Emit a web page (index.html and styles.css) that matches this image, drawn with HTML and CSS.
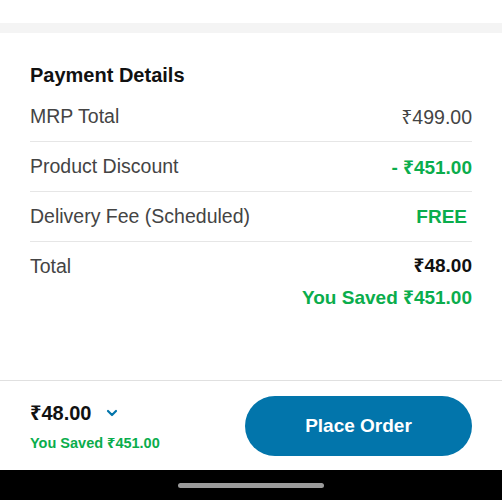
FILE: index.html
```html
<!DOCTYPE html>
<html lang="en">
<head>
  <meta charset="UTF-8">
  <meta name="viewport" content="width=device-width, initial-scale=1.0">
  <title>Payment Details</title>
  <link rel="stylesheet" href="styles.css">
</head>
<body>

  <div class="top"></div>
  <div class="band"></div>

  <main class="details">
    <h2>Payment Details</h2>
    <div class="row">
      <span>MRP Total</span>
      <span>₹499.00</span>
    </div>
    <div class="row">
      <span>Product Discount</span>
      <span class="green">- ₹451.00</span>
    </div>
    <div class="row">
      <span>Delivery Fee (Scheduled)</span>
      <span class="green free">FREE</span>
    </div>
    <div class="row total">
      <span class="total-label">Total</span>
      <div class="total-values">
        <span class="amount">₹48.00</span>
        <span class="green">You Saved ₹451.00</span>
      </div>
    </div>
  </main>

  <footer class="checkout">
    <div class="summary">
      <div class="price">
        ₹48.00
        <svg width="12" height="8" viewBox="0 0 12 8"><path d="M2 2 L6 6 L10 2" fill="none" stroke="#0275ab" stroke-width="2.2" stroke-linecap="round" stroke-linejoin="round"/></svg>
      </div>
      <div class="saved">You Saved ₹451.00</div>
    </div>
    <button>Place Order</button>
  </footer>

  <div class="navbar"><span class="handle"></span></div>

</body>
</html>
```

FILE: styles.css
```css
body {
  margin: 0;
  height: 100vh;
  display: flex;
  flex-direction: column;
  font-family: "Liberation Sans", "Noto Sans", sans-serif;
  background: #fff;
  color: #444;
}

.top {
  height: 23px;
}

.band {
  height: 10px;
  background: #f4f4f4;
}

.details {
  flex: 1;
  padding: 30px 30px 0;
}

h2 {
  margin: 0 0 5px;
  font-size: 20px;
  line-height: 24px;
  color: #111;
}

.row {
  display: flex;
  justify-content: space-between;
  align-items: center;
  height: 49px;
  border-bottom: 1px solid #e6e6e6;
  font-size: 19.5px;
}

.green {
  color: #0aad4c;
  font-weight: bold;
  font-size: 19px;
}

.free {
  margin-right: 5px;
}

.row.total {
  height: auto;
  border-bottom: none;
  align-items: flex-start;
  padding-top: 10px;
}

.total-label {
  margin-top: 3px;
}

.total-values {
  display: flex;
  flex-direction: column;
  align-items: flex-end;
  gap: 6px;
}

.amount {
  color: #111;
  font-weight: bold;
  font-size: 19px;
}

.checkout {
  height: 89px;
  border-top: 1px solid #e0e0e0;
  padding: 0 30px;
  display: flex;
  justify-content: space-between;
  align-items: center;
}

.price {
  display: flex;
  align-items: center;
  gap: 14px;
  font-size: 20px;
  font-weight: bold;
  color: #111;
}

.saved {
  margin-top: 6px;
  font-size: 14.5px;
  font-weight: bold;
  color: #0aad4c;
}

button {
  width: 227px;
  height: 60px;
  border: none;
  border-radius: 30px;
  background: #0275ab;
  color: #fff;
  font-family: inherit;
  font-size: 19px;
  font-weight: bold;
}

.navbar {
  height: 30px;
  background: #000;
  display: flex;
  justify-content: center;
  align-items: center;
}

.handle {
  width: 146px;
  height: 5px;
  border-radius: 3px;
  background: #9a9a9a;
}
```
